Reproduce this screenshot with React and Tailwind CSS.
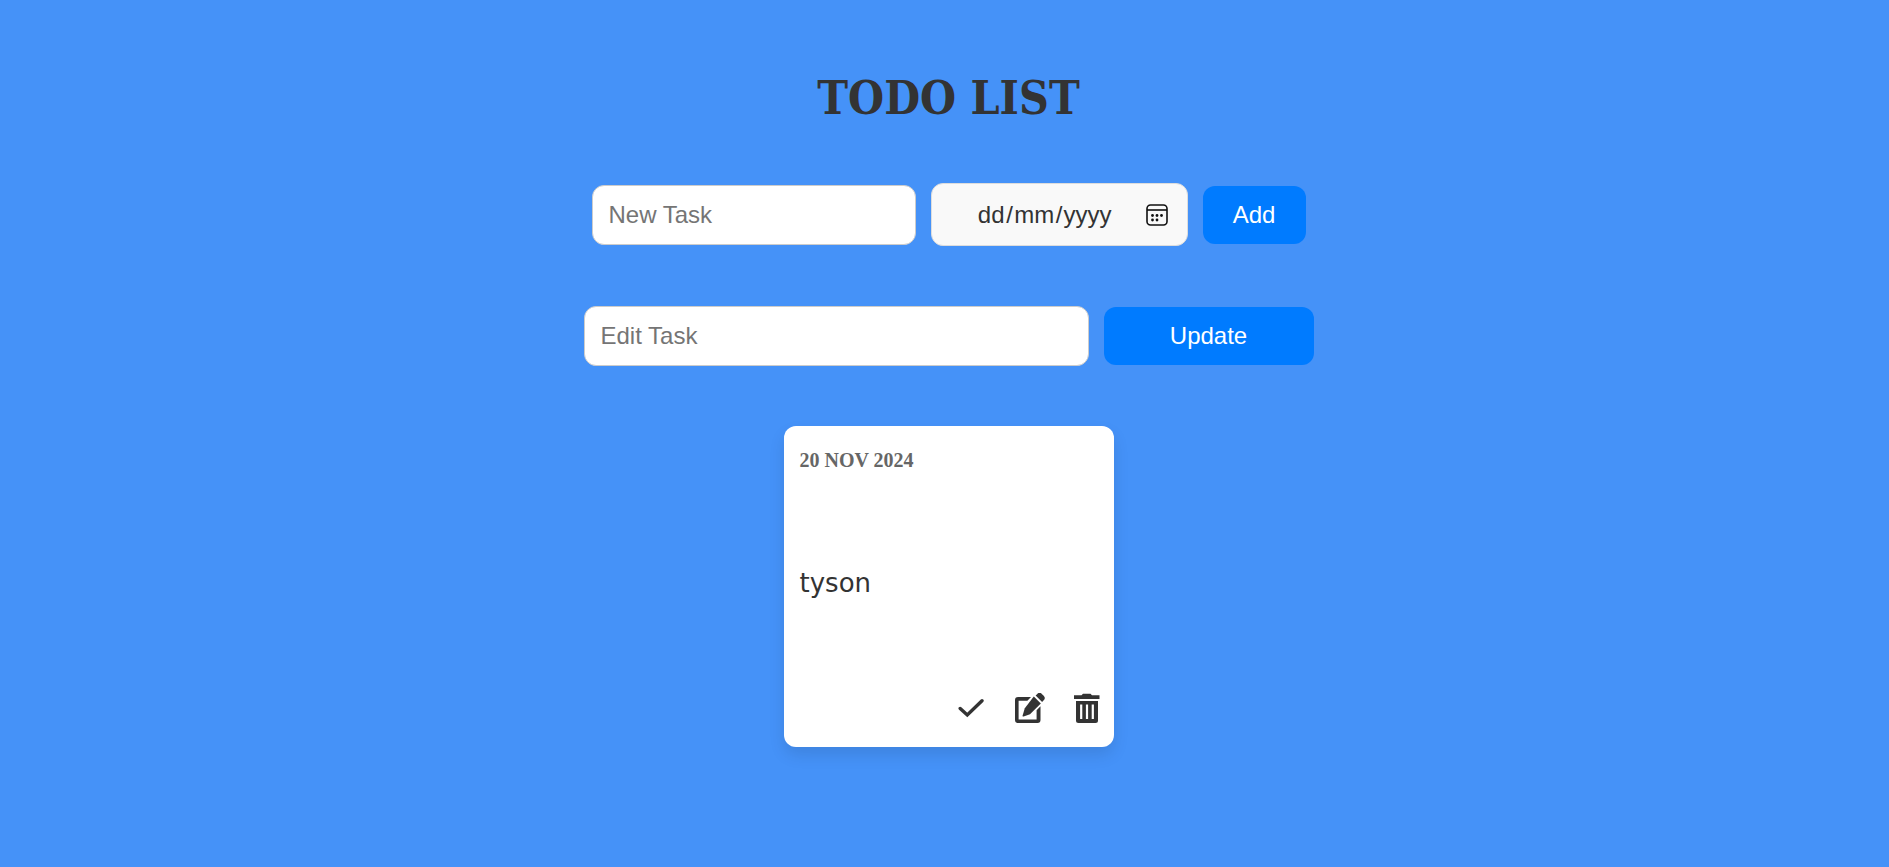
import { useState } from "react";

const inputClass =
  "h-[60px] rounded-xl border border-[#cccccc] bg-white px-4 text-2xl text-[#333333] outline-none placeholder:text-[#757575]";
const buttonClass =
  "h-[58px] rounded-xl bg-[#007bff] text-2xl text-white cursor-pointer";
const partClass =
  "bg-transparent p-0 text-center outline-none placeholder:text-[#333333]";

function CalendarIcon() {
  return (
    <svg width="22" height="22" viewBox="0 0 22 22" fill="none" aria-hidden="true">
      <rect x="1" y="1" width="20" height="20" rx="3.5" stroke="#111" strokeWidth="1.6" />
      <path d="M1 6h20" stroke="#111" strokeWidth="1.6" />
      <g fill="#111">
        <circle cx="6.5" cy="11.5" r="1.4" />
        <circle cx="11" cy="11.5" r="1.4" />
        <circle cx="15.5" cy="11.5" r="1.4" />
        <circle cx="6.5" cy="16" r="1.4" />
        <circle cx="11" cy="16" r="1.4" />
      </g>
    </svg>
  );
}

function CheckIcon() {
  return (
    <svg width="30" height="30" viewBox="0 0 30 30" fill="none" aria-hidden="true">
      <path
        d="M2.2 15.5L9.3 22L24 7.8"
        stroke="currentColor"
        strokeWidth="3.4"
        strokeLinecap="round"
        strokeLinejoin="miter"
      />
    </svg>
  );
}

function EditIcon() {
  return (
    <svg width="30" height="30" viewBox="0 0 30 30" aria-hidden="true">
      <g fill="currentColor">
        <path d="M3 4h13l-3.6 3.800H3.600v18.600h18V17.200l3.900-3.900V27a3 3 0 0 1-3 3H3a3 3 0 0 1-3-3V7a3 3 0 0 1 3-3z" />
        <path d="M18.800 3.600l7 7L15 21.200l-6.400 2.300c-.8.200-1.200-.2-1-1l2.200-7.200z" />
        <path d="M20.600 2.600l1.700-1.700a3.200 3.200 0 0 1 4.500 0l1.900 1.900a3.200 3.200 0 0 1 0 4.500L27.100 9z" />
      </g>
    </svg>
  );
}

function TrashIcon() {
  return (
    <svg width="30" height="30" viewBox="0 0 30 30" aria-hidden="true">
      <path
        fill="currentColor"
        d="M2 2.200h7.500L11 .8h7.500L20 2.200h7.500v3.800H2zM4 8h22v19.500a2.500 2.500 0 0 1-2.500 2.500h-17A2.500 2.500 0 0 1 4 27.500z"
      />
      <path stroke="#fff" strokeWidth="2.2" d="M9.200 11.500v14.500M15 11.500v14.500M20.800 11.500v14.500" />
    </svg>
  );
}

export default function App() {
  const [done, setDone] = useState(false);
  return (
    <main className="flex min-h-screen flex-col items-center bg-[#4592f8] pt-[62px] pl-2 font-['Liberation_Sans',Arial,sans-serif]">
      <h1 className="font-['DejaVu_Serif_Condensed','DejaVu_Serif',serif] text-[46px] leading-[72px] font-bold text-[#333333]">
        TODO LIST
      </h1>

      <form className="mt-[49px] flex items-center gap-[15px]" onSubmit={(e) => e.preventDefault()}>
        <input type="text" aria-label="New task" placeholder="New Task" className={`${inputClass} w-[324px]`} />
        <div
          role="group"
          aria-label="Due date"
          className="flex h-[63px] w-[257px] items-center justify-end rounded-xl border border-[#dddddd] bg-[#f9f9f9] pr-[19px] text-2xl text-[#333333]"
        >
          <input type="text" aria-label="Day" placeholder="dd" className={`${partClass} w-[30px]`} />
          <span>/</span>
          <input type="text" aria-label="Month" placeholder="mm" className={`${partClass} w-[43px]`} />
          <span>/</span>
          <input type="text" aria-label="Year" placeholder="yyyy" className={`${partClass} w-[50px]`} />
          <button type="button" aria-label="Open calendar" className="ml-[33px] cursor-pointer">
            <CalendarIcon />
          </button>
        </div>
        <button type="submit" className={`${buttonClass} w-[103px]`}>Add</button>
      </form>

      <form className="mt-[60px] flex items-center gap-[15px]" onSubmit={(e) => e.preventDefault()}>
        <input type="text" aria-label="Edit task" placeholder="Edit Task" className={`${inputClass} w-[505px]`} />
        <button type="submit" className={`${buttonClass} w-[210px]`}>Update</button>
      </form>

      <article className="mt-[60px] flex h-[321px] w-[330px] flex-col justify-between rounded-xl bg-white pt-5 pr-3 pb-6 pl-4 text-[#333333] shadow-[0_8px_16px_rgba(0,0,0,0.1)]">
        <time dateTime="2024-11-20" className="font-['Liberation_Serif',serif] text-xl font-bold text-[#666666]">
          20 NOV 2024
        </time>
        <p className={`font-['DejaVu_Sans',sans-serif] text-[26px] ${done ? "line-through" : ""}`}>tyson</p>
        <div className="flex justify-end gap-[27px]">
          <button type="button" aria-label="Mark as done" className="cursor-pointer" onClick={() => setDone(!done)}>
            <CheckIcon />
          </button>
          <button type="button" aria-label="Edit" className="cursor-pointer">
            <EditIcon />
          </button>
          <button type="button" aria-label="Delete" className="cursor-pointer">
            <TrashIcon />
          </button>
        </div>
      </article>
    </main>
  );
}
